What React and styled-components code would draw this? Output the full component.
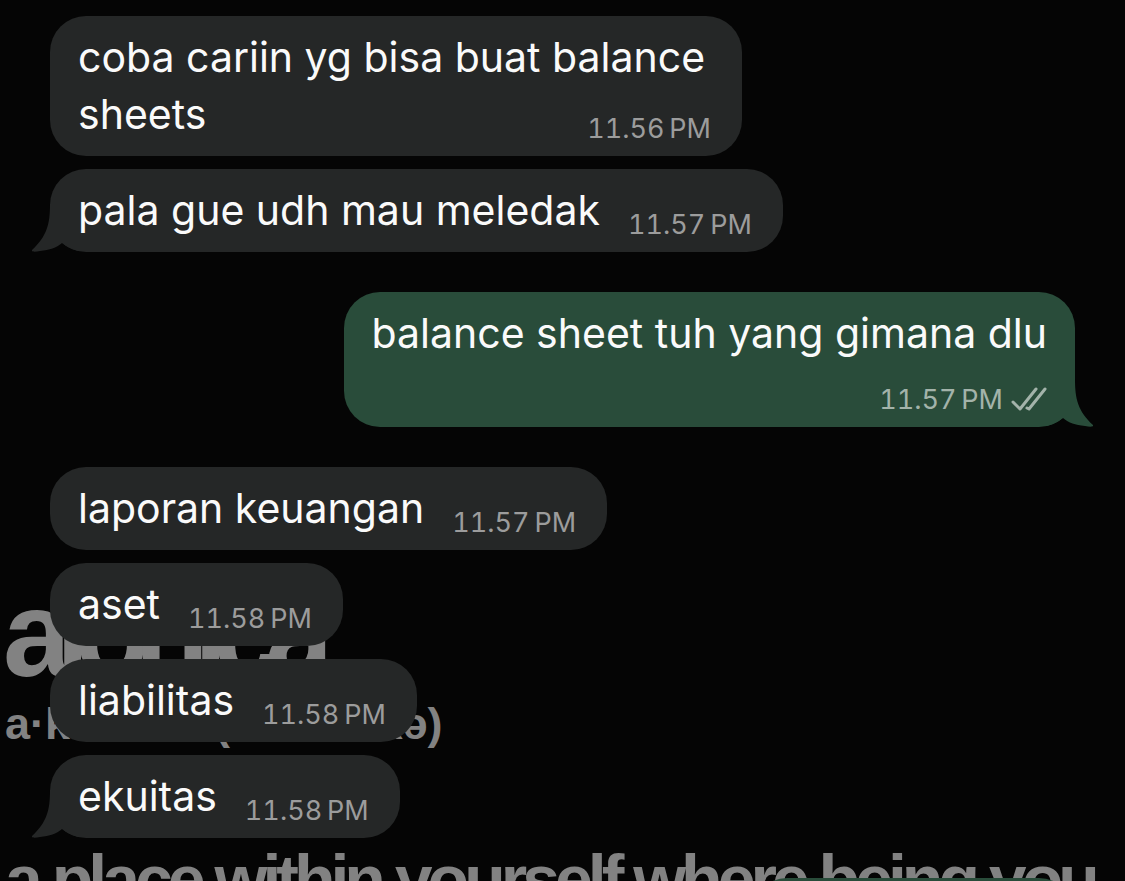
import React from "react";
import styled, { createGlobalStyle } from "styled-components";

const GlobalStyle = createGlobalStyle`
  * { box-sizing: border-box; }
  body { margin: 0; background: #050505; }
`;

const Page = styled.main`
  position: relative;
  height: 100vh;
  overflow: hidden;
  padding: 16px 50px 0;
  background: #050505;
  font-family: Inter, "Liberation Sans", sans-serif;
`;

const Wallpaper = styled.div`
  position: absolute;
  inset: 0;
  z-index: 0;
  color: #828282;
  font-family: "Liberation Sans", Arial, sans-serif;
  font-weight: 700;
  white-space: nowrap;
`;

const WallpaperLine = styled.p`
  position: absolute;
  left: ${(p) => p.$left}px;
  top: ${(p) => p.$top}px;
  margin: 0;
  font-size: ${(p) => p.$size}px;
  line-height: 1;
  letter-spacing: ${(p) => p.$tracking}px;
`;

const Thread = styled.ol`
  position: relative;
  z-index: 1;
  display: flex;
  flex-direction: column;
  gap: 40px;
  margin: 0;
  padding: 0;
  list-style: none;
`;

const Group = styled.li`
  display: flex;
  flex-direction: column;
  align-items: ${(p) => (p.$own ? "flex-end" : "flex-start")};
  gap: 13px;
`;

const Bubble = styled.article`
  position: relative;
  display: flex;
  flex-direction: ${(p) => (p.$own ? "column" : "row")};
  align-items: flex-end;
  gap: ${(p) => (p.$own ? "21px" : "28px")};
  padding: 13px ${(p) => (p.$own ? "28px" : "31px")} 13px 28px;
  border-radius: 36px;
  background: ${(p) => (p.$own ? "#294c3a" : "#252727")};
`;

/* Several lines of text share the bubble's last line with the time. */
const LongBubble = styled(Bubble)`
  display: grid;
  max-width: 692px;

  > * {
    grid-area: 1 / 1;
  }

  > div {
    justify-self: end;
  }
`;

const NextBubble = styled(Bubble)`
  width: 324px;
  height: 83px;
`;

const Text = styled.p`
  margin: 0;
  color: #fafafa;
  font-size: 41px;
  line-height: 57px;
`;

const Meta = styled.div`
  display: flex;
  align-items: center;
  gap: 8px;
  margin-bottom: -3px;
  color: ${(p) => (p.$own ? "#a3b3aa" : "#9c9c9c")};
  font-size: 27px;
  font-variant-numeric: tabular-nums;
  line-height: 34px;
  white-space: nowrap;
`;

const Tail = styled.svg`
  position: absolute;
  bottom: 0;
  ${(p) => (p.$own ? "right: -18px; transform: scaleX(-1);" : "left: -18px;")}
  width: 48px;
  height: 48px;
  fill: ${(p) => (p.$own ? "#294c3a" : "#252727")};
`;

const Ticks = styled.svg`
  width: 36px;
  height: 26px;
  fill: none;
  stroke: currentColor;
  stroke-width: 3;
  stroke-linecap: round;
  stroke-linejoin: round;
`;

const groups = [
  {
    messages: [
      { text: "coba cariin yg bisa buat balance sheets", time: "11.56\u202fPM", long: true },
      { text: "pala gue udh mau meledak", time: "11.57\u202fPM" },
    ],
  },
  { own: true, messages: [{ text: "balance sheet tuh yang gimana dlu", time: "11.57\u202fPM" }] },
  {
    messages: [
      { text: "laporan keuangan", time: "11.57\u202fPM" },
      { text: "aset", time: "11.58\u202fPM" },
      { text: "liabilitas", time: "11.58\u202fPM" },
      { text: "ekuitas", time: "11.58\u202fPM" },
    ],
  },
];

function Message({ text, time, own, last, long }) {
  const Shape = long ? LongBubble : Bubble;
  return (
    <Shape $own={own}>
      {last && (
        <Tail $own={own} viewBox="0 0 48 48" aria-hidden="true">
          <path d="M18 0C18 20 15 32 0 46C-1 48 3 48 8 47C18 46 24 44 30 39C34 42 39 45 46 47V0Z" />
        </Tail>
      )}
      <Text>{text}</Text>
      <Meta $own={own}>
        <time>{time}</time>
        {own && (
          <Ticks viewBox="0 0 36 26" role="img" aria-label="Delivered">
            <path d="M2 15L9 22L25 2M16 21L18 22L34 2" />
          </Ticks>
        )}
      </Meta>
    </Shape>
  );
}

export default function App() {
  return (
    <Page>
      <GlobalStyle />
      <Wallpaper aria-hidden="true">
        <WallpaperLine $left={3} $top={573} $size={122} $tracking={-15}>alonica</WallpaperLine>
        <WallpaperLine $left={5} $top={701} $size={45} $tracking={0}>a·kon·ica (ako·ni·kə)</WallpaperLine>
        <WallpaperLine $left={5} $top={845} $size={68} $tracking={-5}>a place within yourself where being you</WallpaperLine>
      </Wallpaper>
      <Thread>
        {groups.map((group, g) => (
          <Group key={g} $own={group.own}>
            {group.messages.map((m, i) => (
              <Message key={i} {...m} own={group.own} last={i === group.messages.length - 1} />
            ))}
          </Group>
        ))}
        <Group $own>
          <NextBubble $own />
        </Group>
      </Thread>
    </Page>
  );
}
